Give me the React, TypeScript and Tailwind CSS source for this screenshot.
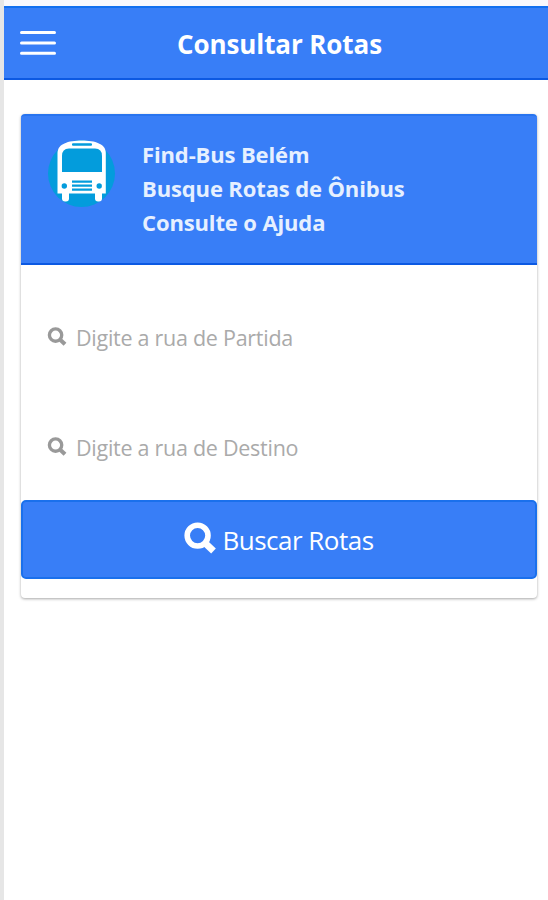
import React from 'react';

interface IconProps {
  className?: string;
}

const SearchIcon = ({ className }: IconProps) => (
  <svg viewBox="0 0 32 32" className={className} fill="none" stroke="currentColor">
    <circle cx="13.6" cy="13.6" r="10.4" strokeWidth="5.6" />
    <path d="M20.5 20.5 L29.5 29" strokeWidth="6.8" />
  </svg>
);

const MenuIcon = ({ className }: IconProps) => (
  <svg viewBox="0 0 36 26" className={className} stroke="currentColor" strokeWidth="3" strokeLinecap="round">
    <path d="M1.5 2.5h33M1.5 13h33M1.5 23.3h33" />
  </svg>
);

const BusIcon = ({ className }: IconProps) => (
  <svg viewBox="0 0 68 70" className={className}>
    <circle cx="33.5" cy="34.5" r="33.5" fill="#039cdc" />
    {/* wheels */}
    <rect x="14" y="48" width="7" height="14.5" rx="3" fill="#fff" />
    <rect x="47" y="48" width="7" height="14.5" rx="3" fill="#fff" />
    {/* body */}
    <path d="M9.5 54.5V14C9.5 5 20 1.5 33.7 1.5S57.8 5 57.8 14v40.5z" fill="#fff" />
    {/* windshield and destination sign */}
    <path d="M14 33V17q0-7.5 7-7.5h26q7 0 7 7.5v16z" fill="#039cdc" />
    <rect x="24" y="4.2" width="20" height="2.6" rx="1" fill="#039cdc" />
    {/* headlights */}
    <circle cx="16.3" cy="47" r="2.7" fill="#039cdc" />
    <circle cx="51.2" cy="47" r="2.7" fill="#039cdc" />
    {/* grille */}
    <path d="M24 42.6h20M24 46.6h20M24 50.6h20" stroke="#039cdc" strokeWidth="2.2" />
  </svg>
);

const fields = [
  { id: 'partida', placeholder: 'Digite a rua de Partida' },
  { id: 'destino', placeholder: 'Digite a rua de Destino' }
];

export default function App() {
  return (
    <div className="min-h-screen border-l-4 border-[#e6e6e6] bg-white font-['Open_Sans','Noto_Sans',sans-serif]">
      <div className="h-[6px] bg-[#f8f8fd]" />

      {/* Top bar */}
      <header className="grid h-[74px] grid-cols-[1fr_auto_1fr] items-center border-y-2 border-t-[#126fef] border-b-[#0c59e2] bg-[#387ef7] pl-[7px] text-white">
        <button type="button" aria-label="Menu" className="pl-[9px]">
          <MenuIcon className="block h-[26px] w-[36px]" />
        </button>
        <h1 className="pt-[3px] text-[26px] font-bold tracking-[-0.1px] whitespace-nowrap">Consultar Rotas</h1>
        <span />
      </header>

      <main className="pt-[34px] pr-[11px] pl-[17px]">
        <div className="rounded-[4px] bg-white pb-[19px] shadow-[0_1px_3px_rgba(0,0,0,0.35)]">
          {/* Card header */}
          <div className="flex h-[151px] items-start rounded-t-[4px] border-y-2 border-t-[#2874ef] border-b-[#0c59e2] bg-[#387ef7] pt-[22px] pl-[27px]">
            <BusIcon className="mt-px h-[70px] w-[68px] shrink-0" />
            <div className="-mt-px ml-[26px] text-[22px] leading-[34px] font-bold tracking-[-0.13px] text-[#e6f0ff]">
              <p>Find-Bus Belém</p>
              <p>Busque Rotas de Ônibus</p>
              <p>Consulte o Ajuda</p>
            </div>
          </div>

          {/* Route fields */}
          <form className="flex flex-col">
            <div className="flex flex-col pt-[17px]">
              {fields.map((field) => (
                <label key={field.id} className="flex h-[110px] items-center pl-[26px]">
                  <SearchIcon className="mr-[9px] -mt-[2px] h-[19px] w-[20px] text-[#999]" />
                  <input
                    id={field.id}
                    type="text"
                    placeholder={field.placeholder}
                    className="w-[300px] bg-transparent pt-[2px] text-[21.5px] tracking-[-0.27px] outline-none placeholder:text-[#aaa]"
                  />
                </label>
              ))}
            </div>
            <button
              type="button"
              className="-mt-[2px] flex h-[79px] items-center justify-center rounded-[5px] border-2 border-[#1a70ec] bg-[#387ef7] text-[26px] tracking-[-0.5px] text-white"
            >
              <SearchIcon className="mr-[6px] -mt-[3px] h-[32px] w-[32px]" />
              <span className="pt-[2px]">Buscar Rotas</span>
            </button>
          </form>
        </div>
      </main>
    </div>
  );
}
